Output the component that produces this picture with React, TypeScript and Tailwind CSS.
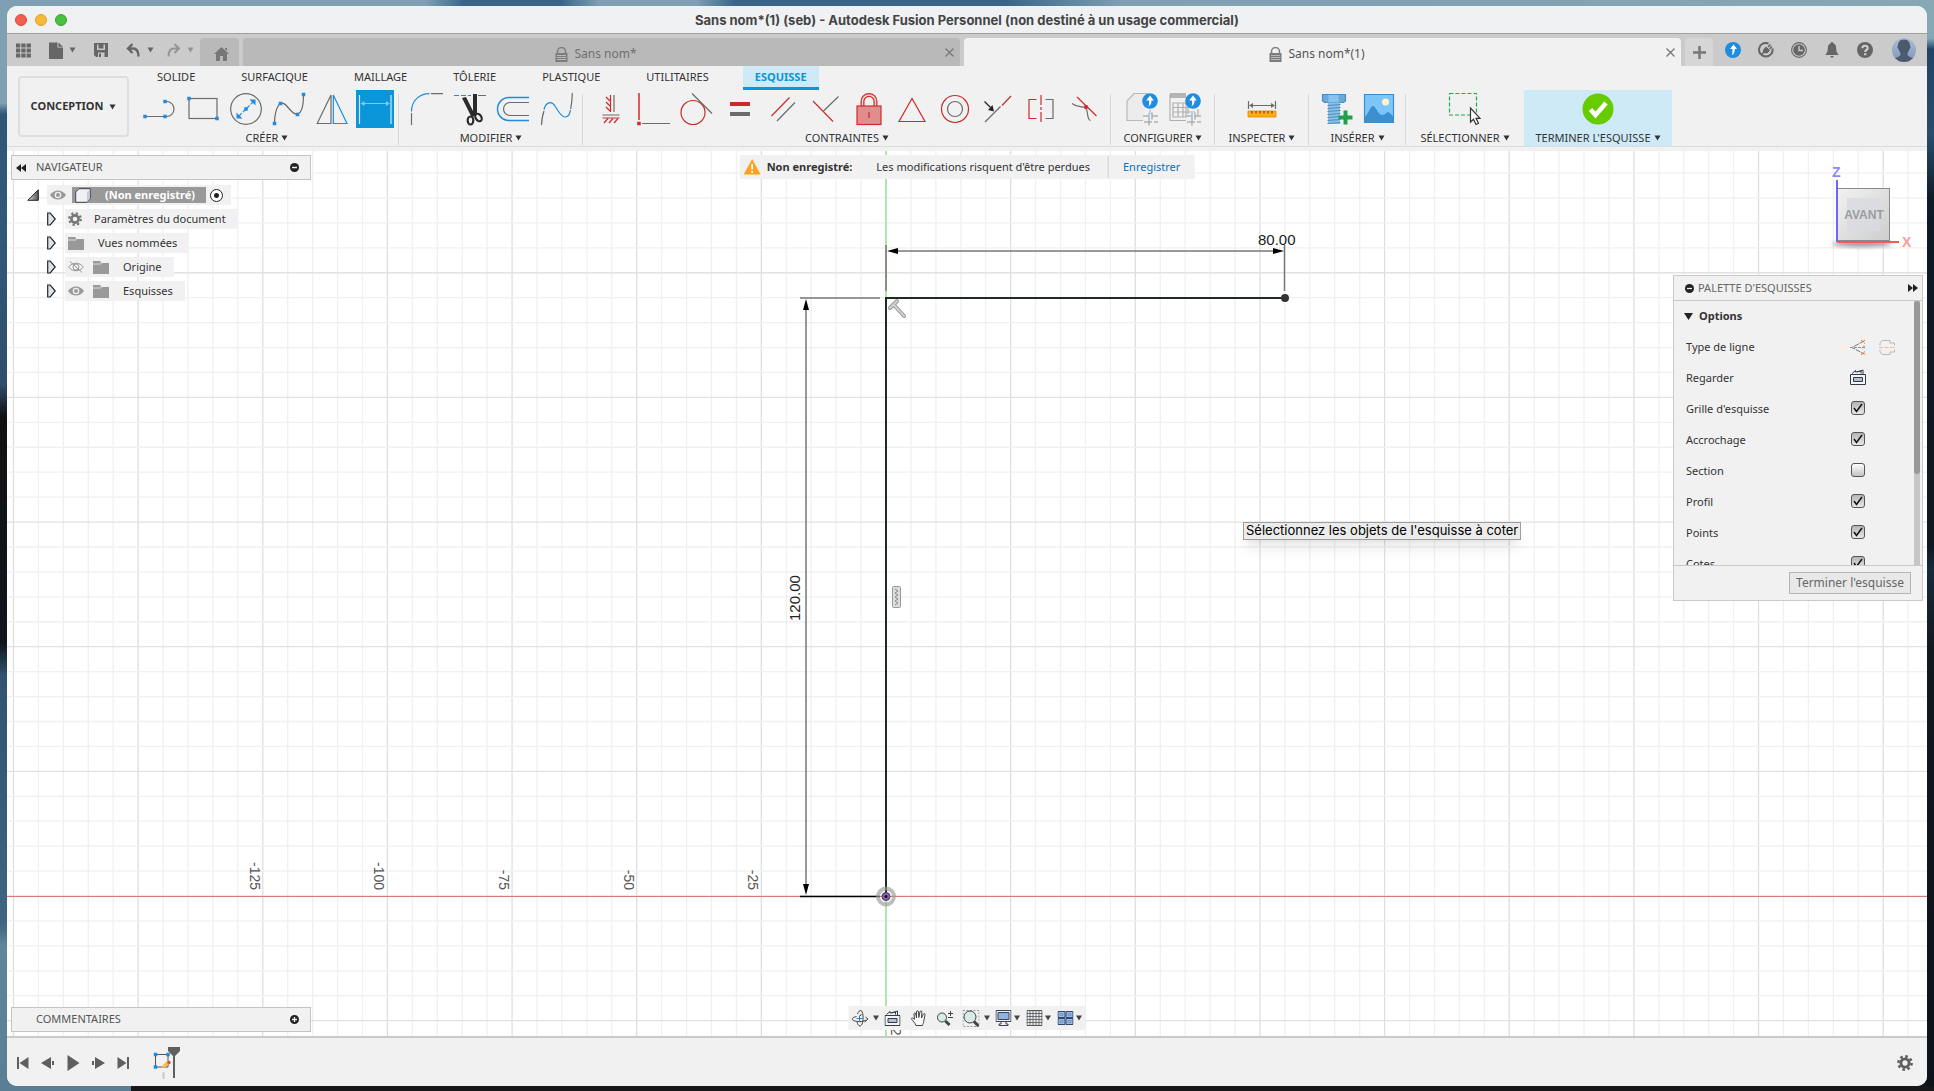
import React, { useState } from 'react';

const GREY = '#6b6b6b';
const RED = '#cf2a2a';
const BLUE = '#1e8ce0';

const MM = 4.986;
const ORIGIN_X = 879;
const ORIGIN_Y = 745;

function Caret({ className = 'text-[#333]' }: { className?: string }) {
  return (
    <svg width="7" height="6" viewBox="0 0 7 6" className={`shrink-0 ${className}`} fill="currentColor">
      <path d="M.5.500h6L3.500 5.500z" />
    </svg>
  );
}

/* ---------- toolbar drawings, all on a 38x38 box ---------- */

function Tool({ children }: { children: React.ReactNode }) {
  return (
    <svg width="38" height="38" viewBox="0 0 38 38" fill="none" stroke={GREY} strokeWidth="1.2">
      {children}
    </svg>
  );
}

function Dot({ x, y, color = BLUE }: { x: number; y: number; color?: string }) {
  return <rect x={x - 1.75} y={y - 1.75} width="3.5" height="3.5" fill={color} stroke="none" />;
}

function LineIcon() {
  return (
    <Tool>
      <path d="M4 26.5H25.500a7.500 7.500 0 0 0 0-15H24" />
      <Dot x={4} y={26.5} />
      <Dot x={24} y={26.5} />
      <Dot x={24} y={11.5} />
    </Tool>
  );
}

function RectIcon() {
  return (
    <Tool>
      <rect x="5" y="8.500" width="28" height="20" />
      <Dot x={5} y={8.5} />
      <Dot x={33} y={28.5} />
    </Tool>
  );
}

function CircleIcon() {
  return (
    <Tool>
      <circle cx="19" cy="19" r="15.300" />
      <path d="M12 26L26 12" stroke={BLUE} strokeDasharray="4 1.500" />
      <path d="M9.500 28.500v-6l6 6zM28.500 9.500v6l-6-6z" fill={BLUE} stroke="none" />
      <Dot x={19} y={19} />
    </Tool>
  );
}

function SplineIcon() {
  return (
    <Tool>
      <path d="M4.500 33c0-8 2-17 6-19.500 6-3 10 12 17 10.500 5-1.500 6-10 6-19" />
      <Dot x={4.5} y={33.5} />
      <Dot x={10.5} y={13.5} />
      <Dot x={27.5} y={24.5} />
      <Dot x={33.5} y={4.5} />
    </Tool>
  );
}

function MirrorIcon() {
  return (
    <Tool>
      <path d="M4.200 33.500L18 5v28.500z" />
      <path d="M34 33.500L20.300 5v28.500z" stroke={BLUE} />
    </Tool>
  );
}

function DimensionIcon() {
  return (
    <Tool>
      <path d="M3.500 5v29M35 5v29" stroke="#cfe9f8" />
      <path d="M6 13.500h27" stroke="#7cc8f5" />
      <path d="M4.500 13.500l4-2.500v5zM34 13.500l-4-2.500v5z" fill="#7cc8f5" stroke="none" />
    </Tool>
  );
}

function FilletIcon() {
  return (
    <Tool>
      <path d="M3.500 21.500C3.500 11 11 3.700 21.500 3.700" stroke={BLUE} />
      <path d="M3.500 23v12M23 3.700h12" />
    </Tool>
  );
}

function TrimIcon() {
  return (
    <Tool>
      <path d="M3 5.500h17" stroke={BLUE} strokeDasharray="5 2" />
      <path d="M27 5.500h8" />
      <path d="M11 8l4-1 8 16-1 4-2-1zM22 4h4v20l-4 3z" fill="#2b2b2b" stroke="none" />
      <ellipse cx="19.500" cy="30.500" rx="2.800" ry="4" stroke="#2b2b2b" strokeWidth="2.200" />
      <ellipse cx="27.500" cy="27.500" rx="2.800" ry="4" stroke="#2b2b2b" strokeWidth="2.200" transform="rotate(-35 27.5 27.5)" />
    </Tool>
  );
}

function OffsetIcon() {
  return (
    <Tool>
      <path d="M35 7.500H15A11.500 11.500 0 0 0 15 30.500H35" stroke={BLUE} strokeWidth="1.500" />
      <path d="M35 12.500H16a6.500 6.500 0 0 0 0 13H35" />
    </Tool>
  );
}

function CurveIcon() {
  return (
    <Tool>
      <path d="M4.500 35c.3-6 1-10 2.500-14M33.700 19c1-5 1.500-10 1.600-16" />
      <path d="M7 19.500C9 12 14.500 10.500 18 16s6 11 10 11 4.500-3 5.500-7" stroke={BLUE} />
    </Tool>
  );
}

function HorizontalVerticalIcon() {
  return (
    <Tool>
      <path d="M18.500 5v17M10.500 28h17" stroke={RED} />
      <path d="M22 5v17M10.500 25h17" />
      <path d="M18 11l-4-4M18 16l-4-4M18 21l-4-4M16 28.500L12 33M21 28.500L17 33M26 28.500L22 33" stroke={RED} />
    </Tool>
  );
}

function CoincidentIcon() {
  return (
    <Tool>
      <path d="M4 3v27" stroke={RED} strokeWidth="1.500" />
      <path d="M7 33.500h28" />
      <Dot x={4} y={33.5} color={RED} />
    </Tool>
  );
}

function TangentIcon() {
  return (
    <Tool>
      <circle cx="15" cy="22.500" r="12" stroke={RED} />
      <path d="M14 3.500l20 20" />
    </Tool>
  );
}

function EqualIcon() {
  return (
    <Tool>
      <path d="M9 12h20v4H9z" fill={RED} stroke="none" />
      <path d="M9 22h20v4H9z" fill={GREY} stroke="none" />
    </Tool>
  );
}

function ParallelIcon() {
  return (
    <Tool>
      <path d="M7.500 26L25.500 7.500" stroke={RED} />
      <path d="M13 31l18-18.500" />
    </Tool>
  );
}

function PerpendicularIcon() {
  return (
    <Tool>
      <path d="M6 11l20 20.500" stroke={RED} />
      <path d="M16.500 21L31.500 6.500" />
    </Tool>
  );
}

function LockIcon() {
  return (
    <Tool>
      <path d="M12.500 16v-4.500a6.500 6.500 0 0 1 13 0V16" stroke={RED} strokeWidth="4" />
      <path d="M12.500 16v-4.500a6.500 6.500 0 0 1 13 0V16" stroke="#f3d4d4" strokeWidth="1.500" />
      <rect x="7" y="16" width="24" height="18.500" fill="#e18d8d" stroke={RED} />
      <path d="M19 22v6" stroke={RED} />
    </Tool>
  );
}

function TriangleIcon() {
  return (
    <Tool>
      <path d="M19 8.500L6 31.500h26z" stroke={RED} />
    </Tool>
  );
}

function ConcentricIcon() {
  return (
    <Tool>
      <circle cx="19" cy="19" r="13.500" stroke={RED} />
      <circle cx="19" cy="19" r="7.500" />
    </Tool>
  );
}

function MidpointIcon() {
  return (
    <Tool>
      <path d="M32 6l-9 9.500" stroke={RED} />
      <path d="M21.500 16.500L6 32" />
      <path d="M5.500 11.500l6 6" stroke="#222" strokeWidth="1.300" />
      <path d="M15 21.500l-6-1.500 4.500-5z" fill="#222" stroke="none" />
    </Tool>
  );
}

function SymmetryIcon() {
  return (
    <Tool>
      <path d="M14.500 9.500H7v19h7.500" stroke={RED} />
      <path d="M19 5v28" stroke={RED} strokeDasharray="10 2 3 2" />
      <path d="M23.500 9.500H31v19h-7.500" />
    </Tool>
  );
}

function CurvatureIcon() {
  return (
    <Tool>
      <path d="M12 7l19.500 19" stroke={RED} />
      <path d="M7 13.500c5 4 9 3 13 4 4 2 1 12 5.500 13" />
      <Dot x={21} y={17} color={RED} />
    </Tool>
  );
}

function UploadBadge() {
  return (
    <g stroke="none">
      <circle cx="27" cy="11" r="7.800" fill={BLUE} />
      <path d="M27 5.500l3.800 5h-2.300c0 3-.6 4.500-3 6 .8-2 .6-4 .6-6h-2.900z" fill="#fff" />
    </g>
  );
}

function ConfigureIcon() {
  return (
    <Tool>
      <path d="M27 19.500V24M20 30.500H4V11l7-7.500h14" stroke="#b9b9b9" fill="#ececec" />
      <path d="M20 26h6M29 26h6M21 32h8M31 32h4M29 22.500v7M26 28.500v7" stroke="#b0b0b0" strokeWidth="1.500" />
      <path d="M26 23v6" stroke="#8cc4ee" strokeWidth="1.500" />
      <UploadBadge />
    </Tool>
  );
}

function ConfigureTableIcon() {
  return (
    <Tool>
      <path d="M4 3h16v5H4z" fill="#b5b5b5" stroke="none" />
      <path d="M4 4v26.500h16M32 19v6M7 13h13v14H7zM7 17.500h22M7 22h22M12 13v14M17 13v14M22 18v6" stroke="#b0b0b0" />
      <path d="M20 26h6M29 26h6M21 32h8M31 32h4M29 22.500v7M26 28.500v7" stroke="#b0b0b0" strokeWidth="1.500" />
      <path d="M26 23v6" stroke="#8cc4ee" strokeWidth="1.500" />
      <UploadBadge />
    </Tool>
  );
}

function MeasureIcon() {
  return (
    <Tool>
      <path d="M5.500 11v8M32.500 11v8M8 15.500h22" />
      <path d="M6 15.500l4-2.500v5zM32 15.500l-4-2.500v5z" fill={GREY} stroke="none" />
      <path d="M5 21h28v6H5z" fill="#ffab12" stroke="#e08c00" strokeWidth=".8" />
      <path d="M9 21v2.500M13 21v2.500M17 21v2.500M21 21v2.500M25 21v2.500M29 21v2.500" stroke="#7a4b00" />
    </Tool>
  );
}

function BoltIcon() {
  return (
    <Tool>
      <path d="M5.500 4.500h23V11l-2 1.500h-19l-2-1.500z" fill="#6aa9d8" stroke="#4a8fc4" />
      <path d="M11.500 5h10v7h-10z" fill="#8cc3ea" stroke="none" />
      <path d="M11 12.500h12V34H11z" fill="#8cc0e6" stroke="none" />
      <path d="M10.500 15.500l13-1M10.500 18.500l13-1M10.500 21.500l13-1M10.500 24.500l13-1M10.500 27.500l13-1M10.500 30.500l13-1M10.500 33.500l13-1" stroke="#4a8fc4" strokeWidth="1" />
      <path d="M28.500 20.500v14M21.500 27.500h14" stroke="#1fa04c" strokeWidth="4" />
    </Tool>
  );
}

function PictureIcon() {
  return (
    <Tool>
      <path d="M4.500 4.500h29v28h-29z" fill="#7cc6fb" stroke="#3c8dc9" />
      <circle cx="25.500" cy="12" r="3.500" fill="#fdf6c8" stroke="none" />
      <path d="M5 27c4-4 5-11 8-11s5 9 9 9 4-3 6-3 3 3 5 4v6H5z" fill="#3c90cf" stroke="none" />
    </Tool>
  );
}

function SelectIcon() {
  return (
    <Tool>
      <path d="M3.500 3.500h27v21.500h-27z" stroke="#23a84f" strokeDasharray="4 2" />
      <path d="M24.500 18v14l3-2.800 2.500 5.300 2.500-1.200-2.500-5h4z" fill="#fff" stroke="#333" />
    </Tool>
  );
}

function FinishIcon() {
  return (
    <Tool>
      <circle cx="19" cy="19" r="15.500" fill="#66cc00" stroke="none" />
      <path d="M11.500 19.500l5 5.500 10.500-12" stroke="#fff" strokeWidth="4.500" />
    </Tool>
  );
}

/* ---------- title bar and document tabs ---------- */

function TitleBar() {
  return (
    <div className="grid h-7 shrink-0 grid-cols-[1fr_auto_1fr] items-center border-b border-[#a0a19c] bg-[#eff1f3] px-2">
      <div className="flex gap-2">
        <button aria-label="Fermer" className="h-3 w-3 rounded-full border border-[#d8493c] bg-[#f35e50]" />
        <button aria-label="Réduire" className="h-3 w-3 rounded-full border border-[#dba02e] bg-[#f7ba37]" />
        <button aria-label="Agrandir" className="h-3 w-3 rounded-full border border-[#38a32f] bg-[#4bbf3f]" />
      </div>
      <h1 className="font-['Inter','Liberation_Sans',sans-serif] text-[13px] leading-4 font-bold text-[#444]">
        Sans nom*(1) (seb) - Autodesk Fusion Personnel (non destiné à un usage commercial)
      </h1>
    </div>
  );
}

function TabLock() {
  return (
    <svg width="13" height="15" viewBox="0 0 13 15" fill="#7d7d7d">
      <path d="M2.500 6V4.500a4 4 0 0 1 8 0V6" fill="none" stroke="#7d7d7d" strokeWidth="1.500" />
      <path d="M.5 6h12v9H.5z" />
      <path d="M2 8.500h9M2 10.500h9M2 12.500h9" stroke="#c8c8c8" strokeWidth=".8" />
    </svg>
  );
}

function DocumentTab({ label, active }: { label: string; active?: boolean }) {
  return (
    <div className={`flex h-7 flex-1 items-center rounded-t-sm pr-[3px] pl-2 ${active ? 'bg-[#f1f1f1] text-[#555]' : 'bg-[#b9b9b9] text-[#6f6f6f]'}`}>
      <button className="flex flex-1 items-center justify-center gap-1.5 pt-1 text-[12px] leading-4">
        <TabLock />
        {label}
      </button>
      <button aria-label={`Fermer ${label}`} className="flex h-4 w-4 items-center justify-center">
        <svg width="9" height="9" viewBox="0 0 9 9" stroke="#777" strokeWidth="1.300">
          <path d="M.5.5l8 8M8.500.5l-8 8" />
        </svg>
      </button>
    </div>
  );
}

function TabBar() {
  return (
    <div className="flex h-8 shrink-0 items-end bg-[#cbcbcb]">
      <div className="flex h-full w-[193px] items-center pl-2 text-[#666]">
        <button aria-label="Panneau de données" className="flex w-4 justify-center">
          <svg width="15" height="15" viewBox="0 0 15 15" fill="#666">
            <path d="M0 .5h4.300v4H0zM5.300.5h4.300v4H5.300zM10.600.5h4.300v4h-4.300zM0 5.500h4.300v4H0zM5.300 5.500h4.300v4H5.300zM10.600 5.500h4.300v4h-4.300zM0 10.500h4.300v4H0zM5.300 10.500h4.300v4H5.300zM10.600 10.500h4.300v4h-4.300z" />
          </svg>
        </button>
        <button aria-label="Fichier" className="ml-[18px] flex items-center gap-1.5">
          <svg width="14" height="17" viewBox="0 0 14 17" fill="#666">
            <path d="M0 .5h8.500v5H14V17H0z" />
            <path d="M9.500.5L14 4.700H9.500z" />
          </svg>
          <Caret className="text-[#666]" />
        </button>
        <button aria-label="Enregistrer" className="ml-[18px]">
          <svg width="14" height="14" viewBox="0 0 14 14">
            <path d="M0 0h14v14H2L0 12z" fill="#666" />
            <path d="M3 1.500h8V7H3z" fill="#cbcbcb" />
            <path d="M4.500 1h5v4.500h-5z" fill="#666" />
            <path d="M4 9.500h6.500V14H4z" fill="#cbcbcb" />
            <path d="M5 10.500h2V14H5z" fill="#666" />
          </svg>
        </button>
        <button aria-label="Annuler" className="ml-[18px] flex items-center gap-1.5">
          <svg width="15" height="14" viewBox="0 0 15 14" fill="none" stroke="#666" strokeWidth="2.400">
            <path d="M6.500 1L2 5.500 6.500 10M3 5.500h4c4 0 5.500 2.500 5.500 8" />
          </svg>
          <Caret className="text-[#666]" />
        </button>
        <button aria-label="Rétablir" className="ml-3 flex items-center gap-1.5">
          <svg width="15" height="14" viewBox="0 0 15 14" fill="none" stroke="#959595" strokeWidth="2">
            <path d="M8.500 1L13 5.500 8.500 10M12 5.500H8C4 5.500 2.500 8 2.500 13.500" />
          </svg>
          <Caret className="text-[#959595]" />
        </button>
      </div>
      <button aria-label="Accueil" className="mr-1 flex h-7 w-[39px] items-center justify-center rounded-t-sm bg-[#b9b9b9] pl-1 pt-1">
        <svg width="15" height="14" viewBox="0 0 15 14" fill="#777">
          <path d="M7.500 0l7.500 7h-2v7H9V9H6v5H2V7H0zM11 1h2v3l-2-2z" />
        </svg>
      </button>
      <div className="flex flex-1 gap-1">
        <DocumentTab label="Sans nom*" />
        <DocumentTab label="Sans nom*(1)" active />
      </div>
      <button aria-label="Nouvel onglet" className="ml-1 flex h-7 w-7 items-center justify-center rounded-t-sm bg-[#d6d6d6]">
        <svg width="13" height="13" viewBox="0 0 13 13" stroke="#777" strokeWidth="2.500">
          <path d="M6.500 0v13M0 6.500h13" />
        </svg>
      </button>
      <div className="flex h-full w-[214px] items-center gap-[17px] pl-3">
        <button aria-label="État de la tâche">
          <svg width="16" height="16" viewBox="0 0 16 16">
            <circle cx="8" cy="8" r="8" fill={BLUE} />
            <path d="M8.500 2.500l3.500 4.500H9.800c0 3-.8 5-3 6.500.8-2 .6-4 .6-6.500H5z" fill="#fff" />
          </svg>
        </button>
        <button aria-label="Extensions">
          <svg width="16" height="16" viewBox="0 0 16 16" fill="none" stroke="#666">
            <path d="M10.500 1.500A6.800 6.800 0 1 0 14.500 6.500" strokeWidth="2" />
            <path d="M3.500 12.500L7 9M10 5l2.500-2.500M11.500 7L14 4.500" strokeWidth="1.600" />
            <path d="M8 5l3.500 3.500L9 11l-3-.5L5.500 8z" fill="#666" />
          </svg>
        </button>
        <button aria-label="Historique">
          <svg width="16" height="16" viewBox="0 0 16 16">
            <circle cx="8" cy="8" r="7.400" fill="none" stroke="#666" strokeWidth="1.100" />
            <circle cx="8" cy="8" r="5.800" fill="#666" />
            <path d="M8 4v4.500h4" stroke="#cbcbcb" strokeWidth="1.400" fill="none" />
          </svg>
        </button>
        <button aria-label="Notifications">
          <svg width="16" height="16" viewBox="0 0 16 16" fill="#666">
            <path d="M8 0c.8 0 1.200.5 1.200 1.300C11.500 2 12.200 4 12.200 6.500c0 3 .8 4.500 2.600 6.500H1.200C3 11 3.800 9.500 3.800 6.500c0-2.500.7-4.500 3-5.200C6.800.5 7.200 0 8 0zM6.300 14h3.400c-.3 2-3.100 2-3.400 0z" />
          </svg>
        </button>
        <button aria-label="Aide">
          <svg width="16" height="16" viewBox="0 0 16 16">
            <circle cx="8" cy="8" r="8" fill="#666" />
            <path d="M5.400 6.200C5.400 3 10.700 3 10.700 6c0 2-2.500 1.800-2.500 4" fill="none" stroke="#d4d4d4" strokeWidth="2" />
            <path d="M7.100 11.300h2.200v2H7.100z" fill="#d4d4d4" />
          </svg>
        </button>
        <button aria-label="Profil" className="ml-0.5">
          <svg width="24" height="24" viewBox="0 0 24 24">
            <defs>
              <linearGradient id="avatar" x1="0" y1="0" x2="0" y2="1">
                <stop offset="0" stopColor="#a9bdd6" />
                <stop offset="1" stopColor="#8097bd" />
              </linearGradient>
              <clipPath id="avatar-clip">
                <circle cx="12" cy="12" r="12" />
              </clipPath>
            </defs>
            <circle cx="12" cy="12" r="12" fill="url(#avatar)" />
            <path clipPath="url(#avatar-clip)" d="M12 1.500c4.500 0 6 3 6 6 1 .5.500 3-.5 3.500-.4 2-1.300 3-2 4 0 3 .5 3.500 5.500 5v4H3v-4c5-1.500 5.500-2 5.500-5-.7-1-1.600-2-2-4-1-.5-1.500-3-.5-3.500 0-3 1.500-6 6-6z" fill="#4c5a70" />
          </svg>
        </button>
      </div>
    </div>
  );
}

/* ---------- ribbon ---------- */

const ribbonTabs = ['SOLIDE', 'SURFACIQUE', 'MAILLAGE', 'TÔLERIE', 'PLASTIQUE', 'UTILITAIRES', 'ESQUISSE'];

const groups = [
  {
    label: 'CRÉER',
    width: 'w-[264px]',
    tools: [
      { name: 'Ligne', icon: LineIcon },
      { name: 'Rectangle', icon: RectIcon },
      { name: 'Cercle', icon: CircleIcon },
      { name: 'Spline', icon: SplineIcon },
      { name: 'Symétrie', icon: MirrorIcon },
      { name: 'Cote', icon: DimensionIcon, active: true },
    ],
  },
  {
    label: 'MODIFIER',
    width: 'w-[184px]',
    tools: [
      { name: 'Congé', icon: FilletIcon },
      { name: 'Ajuster', icon: TrimIcon },
      { name: 'Décaler', icon: OffsetIcon },
      { name: 'Courbe', icon: CurveIcon },
    ],
  },
  {
    label: 'CONTRAINTES',
    width: 'w-[528px]',
    tools: [
      { name: 'Horizontal/Vertical', icon: HorizontalVerticalIcon },
      { name: 'Coïncident', icon: CoincidentIcon },
      { name: 'Tangent', icon: TangentIcon },
      { name: 'Égal', icon: EqualIcon },
      { name: 'Parallèle', icon: ParallelIcon },
      { name: 'Perpendiculaire', icon: PerpendicularIcon },
      { name: 'Verrouiller', icon: LockIcon },
      { name: 'Milieu', icon: TriangleIcon },
      { name: 'Concentrique', icon: ConcentricIcon },
      { name: 'Colinéaire', icon: MidpointIcon },
      { name: 'Symétrique', icon: SymmetryIcon },
      { name: 'Courbure', icon: CurvatureIcon },
    ],
  },
  {
    label: 'CONFIGURER',
    width: 'w-[104px]',
    tools: [
      { name: 'Configurer', icon: ConfigureIcon },
      { name: 'Table', icon: ConfigureTableIcon },
    ],
  },
  { label: 'INSPECTER', width: 'w-[94px]', tools: [{ name: 'Mesurer', icon: MeasureIcon }] },
  {
    label: 'INSÉRER',
    width: 'w-[97px]',
    tools: [
      { name: 'Fixation', icon: BoltIcon },
      { name: 'Canevas', icon: PictureIcon },
    ],
  },
  { label: 'SÉLECTIONNER', width: 'w-[118px]', tools: [{ name: 'Sélectionner', icon: SelectIcon }] },
  { label: "TERMINER L'ESQUISSE", width: 'w-[148px]', tools: [{ name: "Terminer l'esquisse", icon: FinishIcon }], finish: true },
];

function Ribbon() {
  const [tab, setTab] = useState('ESQUISSE');

  return (
    <div className="shrink-0 border-b-4 border-[#f1f1f1] bg-[#f1f1f1]">
      <div className="flex h-[81px] border-b border-[#dcdcdc]">
        <button className="mt-2.5 ml-[11px] flex h-[61px] w-[111px] items-center justify-center gap-1.5 rounded-sm border-2 border-[#dedede] text-[11px] font-bold text-[#333]">
          CONCEPTION
          <Caret />
        </button>
        <div className="flex flex-col">
          <nav className="ml-4 flex h-6 gap-[22px] text-[11px] leading-4 text-[#333]">
            {ribbonTabs.map((name) => (
              <button
                key={name}
                onClick={() => setTab(name)}
                className={`h-6 px-3 ${tab === name ? 'border-b-3 border-[#0a96d8] bg-[#cdeaf6] font-bold text-[#0a96d8]' : 'border-b-3 border-transparent'}`}
              >
                {name}
              </button>
            ))}
          </nav>
          <div className="ml-1.5 flex flex-1">
            {groups.map((group) => (
              <div
                key={group.label}
                className={`relative flex flex-col items-center ${group.width} ${group.finish ? 'bg-[#cdeaf6]' : ''}`}
              >
                <div className="flex">
                  {group.tools.map(({ name, icon: Icon, active }: { name: string; icon: () => React.JSX.Element; active?: boolean }) => (
                    <button key={name} aria-label={name} className="flex w-[43px] justify-center">
                      <span className={active ? 'bg-[#0a96d8]' : ''}>
                        <Icon />
                      </span>
                    </button>
                  ))}
                </div>
                <button className="mt-0.5 flex items-center gap-[3px] text-[11px] leading-4 whitespace-nowrap text-[#333]">
                  {group.label}
                  <Caret />
                </button>
                {!group.finish && group.label !== 'SÉLECTIONNER' && (
                  <span className="absolute top-1 right-0 h-[51px] w-px bg-[#d8d8d8]" />
                )}
              </div>
            ))}
          </div>
        </div>
      </div>
    </div>
  );
}

/* ---------- canvas ---------- */

function Grid() {
  const vertical = Array.from({ length: 90 }, (_, i) => i - 36);
  const horizontal = Array.from({ length: 60 }, (_, i) => i - 45);
  const ticks = [-125, -100, -75, -50, -25];

  return (
    <svg className="absolute inset-0 h-full w-full" aria-label="Esquisse">
      <g strokeWidth="1.300">
        {vertical.map((n) => (
          <line key={n} x1={ORIGIN_X + n * 5 * MM} x2={ORIGIN_X + n * 5 * MM} y1="0" y2="100%" stroke={n % 5 === 0 ? '#dfdfdf' : '#f0f0f0'} />
        ))}
        {horizontal.map((n) => (
          <line key={n} y1={ORIGIN_Y + n * 5 * MM} y2={ORIGIN_Y + n * 5 * MM} x1="0" x2="100%" stroke={n % 5 === 0 ? '#e2e2e2' : '#f0f0f0'} />
        ))}
      </g>
      <line x1="0" x2="100%" y1={ORIGIN_Y + 0.5} y2={ORIGIN_Y + 0.5} stroke="#d87878" />
      <line x1={ORIGIN_X} x2={ORIGIN_X} y1="0" y2="100%" stroke="#abe9ab" strokeWidth="2" />
      <g fill="#555" fontFamily="'Liberation Sans', Arial, sans-serif" fontSize="14">
        {ticks.map((t) => (
          <text key={t} textAnchor="end" transform={`translate(${ORIGIN_X + t * MM - 13} ${ORIGIN_Y - 6}) rotate(90)`}>
            {t}
          </text>
        ))}
        <text transform={`translate(${ORIGIN_X + 5} 872) rotate(90)`}>-25</text>
      </g>

      <g stroke="#777" strokeWidth="1.500">
        <path d="M879 94v46M1277.500 94v46M884 100h388M799 152v588M793 147h80" />
        <path d="M793 745.500h80" stroke="#000" />
      </g>
      <path d="M880 100l11-3v6zM1277 100l-11-3v6zM799 148l-3 11h6zM799 744l-3-11h6z" />
      <path d="M879 745V147h398" fill="none" stroke="#1d2b23" strokeWidth="2" />
      <circle cx="1278" cy="147" r="4" fill="#333" />
      <g fill="#222" fontFamily="'Liberation Sans', Arial, sans-serif" fontSize="15">
        <text x="1251" y="94">80.00</text>
        <text transform="translate(793 470) rotate(-90)">120.00</text>
      </g>

      <g fill="none" strokeLinecap="round">
        <path d="M883 157l7-7M887 154l10 11" stroke="#999" strokeWidth="4" />
        <path d="M883 157l7-7M887 154l10 11" stroke="#d0d0d0" strokeWidth="2" />
      </g>
      <rect x="885.500" y="435.500" width="8" height="21" rx="1" fill="#ddd" stroke="#999" />
      <path d="M888 438l3 2-3 2 3 2-3 2 3 2-3 2 3 2-3 2" fill="none" stroke="#888" />

      <circle cx="879" cy="745.500" r="8" fill="none" stroke="#999" strokeOpacity=".65" strokeWidth="4" />
      <circle cx="879" cy="745.500" r="4" fill="#8a63b8" stroke="#3d3350" />
      <circle cx="879" cy="745.500" r="1.500" fill="#111" />
    </svg>
  );
}

function RoundSign({ plus }: { plus?: boolean }) {
  return (
    <svg width="9" height="9" viewBox="0 0 9 9">
      <circle cx="4.500" cy="4.500" r="4.500" fill="#222" />
      <path d={plus ? 'M2 4.500h5M4.500 2v5' : 'M2 4.500h5'} stroke="#f1f1f1" strokeWidth="1.300" />
    </svg>
  );
}

function Eye({ off }: { off?: boolean }) {
  return (
    <svg width="16" height="12" viewBox="0 0 16 12">
      {off ? (
        <g fill="none" stroke="#999">
          <path d="M.7 6C4 1 12 1 15.300 6 12 11 4 11 .7 6zM2 .5l12 11" />
          <circle cx="8" cy="6" r="3" />
        </g>
      ) : (
        <g>
          <path d="M0 6C4 0 12 0 16 6 12 12 4 12 0 6z" fill="#999" />
          <circle cx="8" cy="6" r="3.300" fill="#f1f1f1" />
          <circle cx="8" cy="6" r="2" fill="#999" />
        </g>
      )}
    </svg>
  );
}

function Folder() {
  return (
    <svg width="16" height="13" viewBox="0 0 16 13" fill="#999">
      <path d="M0 0h7l1.500 2H16v11H0z" />
      <path d="M0 3h7.500L9 1.800" stroke="#ddd" fill="none" />
    </svg>
  );
}

function Gear({ size, color }: { size: number; color: string }) {
  return (
    <svg width={size} height={size} viewBox="0 0 14 14" fill="none" stroke={color}>
      <circle cx="7" cy="7" r="3.600" strokeWidth="2.600" />
      <circle cx="7" cy="7" r="5.800" strokeWidth="2.200" strokeDasharray="2.280 2.280" />
    </svg>
  );
}

function Expander() {
  return (
    <button aria-label="Développer" className="mr-[9px]">
      <svg width="9" height="14" viewBox="0 0 9 14">
        <path d="M.7 1h2.500L8.300 7l-5.100 6H.7z" fill="#e0e2ea" stroke="#222" strokeWidth="1.200" />
      </svg>
    </button>
  );
}

const treeRows = [
  { label: 'Paramètres du document', icon: 'gear', gap: 'gap-3' },
  { label: 'Vues nommées', icon: 'folder', gap: 'gap-[14px]' },
  { label: 'Origine', icon: 'off', gap: 'gap-[14px]' },
  { label: 'Esquisses', icon: 'on', gap: 'gap-[14px]' },
];

function Browser() {
  return (
    <aside className="absolute top-1 left-1 w-[300px] text-[11px] text-[#333]">
      <div className="flex h-[25px] items-center border border-[#c4c4c4] bg-[#f1f1f1] pr-[11px] pl-1">
        <button aria-label="Réduire le navigateur">
          <svg width="10" height="8" viewBox="0 0 10 8" fill="#222">
            <path d="M5 0v8L0 4zM10 0v8L5 4z" />
          </svg>
        </button>
        <h2 className="ml-2.5 flex-1 text-[#555]">NAVIGATEUR</h2>
        <button aria-label="Réduire">
          <RoundSign />
        </button>
      </div>
      <ul className="mt-[5px] flex flex-col gap-1">
        <li className="flex h-5 items-center pl-4">
          <svg width="12" height="12" viewBox="0 0 12 12" className="mr-2">
            <defs>
              <linearGradient id="tri">
                <stop offset="0" stopColor="#ddd" />
                <stop offset="1" stopColor="#555" />
              </linearGradient>
            </defs>
            <path d="M11.300.8v10.500H.8z" fill="url(#tri)" stroke="#222" />
          </svg>
          <div className="flex h-5 items-center bg-[#f1f1f1] pr-2 pl-[3px]">
            <Eye />
            <div className="mr-1 ml-1.5 flex h-4 items-center gap-[14px] bg-[#999] pr-[11px] pl-[3px] font-bold text-white">
              <svg width="16" height="15" viewBox="0 0 16 15">
                <path d="M.7 4L4 .7h11.300v9.800l-3.500 3.800H.7z" fill="#f0f1f6" stroke="#444" />
                <path d="M12 4l3-3v9.500l-3 3.500z" fill="#c9cbd6" />
              </svg>
              (Non enregistré)
            </div>
            <input type="radio" name="component" defaultChecked aria-label="Activer le composant" className="h-[13px] w-[13px] appearance-none rounded-full border border-[#222] bg-[radial-gradient(circle,#222_2px,white_3px)]" />
          </div>
        </li>
        {treeRows.map((row) => (
          <li key={row.label} className="flex h-5 items-center pl-9">
            <Expander />
            <div className={`flex h-5 items-center bg-[#f1f1f1] pr-3 pl-[3px] ${row.gap}`}>
              {row.icon === 'gear' && <Gear size={14} color="#777" />}
              {row.icon === 'folder' && <Folder />}
              {(row.icon === 'on' || row.icon === 'off') && (
                <span className="flex items-center gap-[9px]">
                  <Eye off={row.icon === 'off'} />
                  <Folder />
                </span>
              )}
              {row.label}
            </div>
          </li>
        ))}
      </ul>
    </aside>
  );
}

function Comments() {
  return (
    <div className="absolute bottom-1 left-1 flex h-[25px] w-[300px] items-center justify-between border border-[#c4c4c4] bg-[#f1f1f1] pr-[11px] pl-6 text-[11px] text-[#555]">
      <h2>COMMENTAIRES</h2>
      <button aria-label="Ajouter un commentaire">
        <RoundSign plus />
      </button>
    </div>
  );
}

function UnsavedBanner() {
  return (
    <div className="absolute top-1 left-1/2 flex h-6 -translate-x-1/2 items-center bg-[#f1f1f1] text-[11px] whitespace-nowrap text-[#333]">
      <svg width="17" height="16" viewBox="0 0 17 16" className="mx-1">
        <path d="M8.500 0L17 15.500H0z" fill="#ffa01e" />
        <path d="M8.500 5v5.500M8.500 12v2" stroke="#fff" strokeWidth="1.800" />
      </svg>
      <strong className="ml-0.5">Non enregistré:</strong>
      <span className="ml-6">Les modifications risquent d'être perdues</span>
      <a href="#enregistrer" className="ml-[18px] flex h-[22px] items-center border-l border-[#d0d0d0] px-3.5 text-[#0a6fb5]">
        Enregistrer
      </a>
    </div>
  );
}

function ViewCube() {
  return (
    <svg width="84" height="92" viewBox="0 0 84 92" className="absolute top-[10px] right-4" fontFamily="'Liberation Sans', Arial, sans-serif" fontWeight="bold">
      <defs>
        <linearGradient id="face" x1="0" y1="0" x2="1" y2="1">
          <stop offset="0" stopColor="#f2f2f2" />
          <stop offset="1" stopColor="#cdcdcd" />
        </linearGradient>
        <filter id="soft" x="-20%" y="-200%" width="140%" height="500%">
          <feGaussianBlur stdDeviation="2" />
        </filter>
      </defs>
      <ellipse cx="35" cy="83" rx="30" ry="2.500" fill="#888" filter="url(#soft)" />
      <rect x="10.500" y="27.500" width="52" height="52" fill="url(#face)" stroke="#8a8a8a" />
      <rect x="20" y="37" width="33" height="33" fill="#d9dbdf" opacity=".8" />
      <path d="M10 19v62" stroke="#6a6af0" strokeWidth="2" />
      <path d="M10 81h62" stroke="#f25a5a" strokeWidth="2" />
      <text x="37" y="58" textAnchor="middle" fontSize="12" fill="#9a9da3">AVANT</text>
      <text x="5" y="16" fontSize="14" fill="#8c8cf8">Z</text>
      <text x="75" y="86" fontSize="14" fill="#f99">X</text>
    </svg>
  );
}

/* ---------- sketch palette ---------- */

const options = [
  { label: "Grille d'esquisse", checked: true },
  { label: 'Accrochage', checked: true },
  { label: 'Section', checked: false },
  { label: 'Profil', checked: true },
  { label: 'Points', checked: true },
  { label: 'Cotes', checked: true },
];

function LookAt() {
  return (
    <svg width="16" height="16" viewBox="0 0 16 16" fill="none" stroke="#333a48">
      <path d="M.5 5.500h15v10H.5z" fill="#f4f5f8" />
      <path d="M3.500 8.500h9v4h-9z" fill="#b7bdca" />
      <path d="M2 4.500l3.500-3v1.500L11 2v2.500M7 3L13 1v4" />
    </svg>
  );
}

function SketchPalette() {
  return (
    <aside className="absolute top-[124px] right-1 w-[250px] border border-[#c9c9c9] bg-[#f1f1f1] text-[11px] text-[#333]">
      <div className="flex h-[25px] items-center border-b border-[#c9c9c9] pr-1 pl-[11px]">
        <button aria-label="Réduire">
          <RoundSign />
        </button>
        <h2 className="ml-1 flex-1 text-[#666]">PALETTE D'ESQUISSES</h2>
        <button aria-label="Ancrer la palette">
          <svg width="10" height="8" viewBox="0 0 10 8" fill="#222">
            <path d="M0 0v8l5-4zM5 0v8l5-4z" />
          </svg>
        </button>
      </div>
      <div className="flex h-[265px] overflow-hidden border-b border-[#c9c9c9]">
        <div className="flex-1 pl-3">
          <button className="flex h-[31px] w-full items-center gap-1.5 font-bold">
            <svg width="9" height="7" viewBox="0 0 9 7" className="-ml-0.5" fill="#222">
              <path d="M0 0h9L4.500 7z" />
            </svg>
            Options
          </button>
          <div className="flex h-[31px] items-center">
            <span className="flex-1">Type de ligne</span>
            <button aria-label="Construction" className="mr-3">
              <svg width="17" height="17" viewBox="0 0 17 17" fill="none" stroke="#777">
                <path d="M14 2L2 8.500 14 15" strokeDasharray="5 1" />
                <path d="M0 8.500h16M11 1l4 3.500M15 1l-2 2M11 16l4-3.500M13 13.500l2 2M14 6.500v4" stroke="#e27a2c" strokeDasharray="3 1" />
              </svg>
            </button>
            <button aria-label="Ligne d'axe" className="mr-[18px]">
              <svg width="17" height="17" viewBox="0 0 17 17" fill="none" stroke="#b9b9b9">
                <path d="M1 6.500V4l2-2.500h8V4h4.500v2.500M1 10.500V13l2 2.500h8V13h4.500v-2.500" />
                <path d="M0 8.500h17" stroke="#f1b994" strokeDasharray="4 1.500" />
              </svg>
            </button>
          </div>
          <div className="flex h-[31px] items-center">
            <span className="flex-1">Regarder</span>
            <button aria-label="Regarder" className="mr-12 mb-1">
              <LookAt />
            </button>
          </div>
          {options.map((option) => (
            <label key={option.label} className="flex h-[31px] items-center">
              <span className="flex-1">{option.label}</span>
              <span className="relative mr-[49px] mb-1 h-[14px] w-[14px]">
                <input
                  type="checkbox"
                  defaultChecked={option.checked}
                  className="peer block h-[14px] w-[14px] appearance-none rounded-[3px] border border-[#555] bg-linear-to-b from-white to-[#c4c4c4] checked:from-[#b5b5b5] checked:to-[#e8e8e8]"
                />
                <svg width="14" height="14" viewBox="0 0 14 14" className="pointer-events-none absolute inset-0 hidden peer-checked:block">
                  <path d="M3 7l2.500 3.500L11 3" fill="none" stroke="#111" strokeWidth="1.500" />
                </svg>
              </span>
            </label>
          ))}
        </div>
        <div className="mr-0.5 w-1.5 bg-[#c6c6c6]">
          <div className="h-[173px] rounded-full bg-[#999]" />
        </div>
      </div>
      <div className="flex h-[34px] items-center justify-end pr-[11px]">
        <button className="h-[22px] w-[122px] border border-[#b5b5b5] bg-[#e8e8e8] text-[12px] whitespace-nowrap text-[#666]">Terminer l'esquisse</button>
      </div>
    </aside>
  );
}

/* ---------- navigation bar ---------- */

function NavigationBar() {
  return (
    <div className="absolute bottom-[6px] left-1/2 flex h-6 w-[237px] -translate-x-1/2 items-center bg-[#f1f1f1] px-[3px]">
      <button aria-label="Orbite" className="flex w-7 shrink-0 items-center justify-between">
        <svg width="17" height="17" viewBox="0 0 17 17" fill="none" stroke="#444">
          <path d="M6 4C8-1 11-1 11.500 6c.5 5-1 10-3 10-1.500 0-2.500-2-3-4" />
          <path d="M5 6.500c-6 1.500-6 4 1 5 3 .4 6 0 8.500-1.500M10 4l-1.500 2M14 7l2.500 2-3.500 3" />
          <path d="M8 5.500v6M5 8.500h6" stroke="#2b7fd0" />
        </svg>
        <Caret className="text-[#444]" />
      </button>
      <button aria-label="Regarder" className="ml-[5px] shrink-0">
        <LookAt />
      </button>
      <button aria-label="Panoramique" className="ml-2.5 shrink-0">
        <svg width="17" height="17" viewBox="0 0 17 17" fill="#fbfbfb" stroke="#444">
          <path d="M5.500 15.500C5 13 2 11 .8 8.500c.7-1 2-.6 3.200 1L3.500 4c0-1.200 1.500-1.500 1.800 0l.7 4V2c0-1.600 1.900-1.600 2 0l.3 5.500L9.500 1.800c.3-1.500 2-1.200 1.900.3L11 8l1.800-3.800c.6-1.200 2-.6 1.700.6l-1.300 6.700c-.3 2-.9 2.500-1.200 4z" />
        </svg>
      </button>
      <button aria-label="Zoom" className="ml-[9px] shrink-0">
        <svg width="17" height="17" viewBox="0 0 17 17" fill="none" stroke="#444">
          <circle cx="5.500" cy="7.500" r="4.500" fill="#d9ebe9" />
          <path d="M9 11l4 4" strokeWidth="3" />
          <path d="M14 1v5M11.500 3.500h5M11.500 7.500h5" />
        </svg>
      </button>
      <button aria-label="Fenêtre de zoom" className="ml-[9px] flex w-7 shrink-0 items-center justify-between">
        <svg width="17" height="17" viewBox="0 0 17 17" fill="none" stroke="#444">
          <path d="M.5.5h16v16H.5z" stroke="#999" strokeDasharray="2 1.500" />
          <circle cx="7.500" cy="7" r="6" fill="#d9ebe9" />
          <path d="M11.500 11.500l4.500 4.500" strokeWidth="3" />
        </svg>
        <Caret className="text-[#444]" />
      </button>
      <button aria-label="Paramètres d'affichage" className="ml-[5px] flex w-[25px] shrink-0 items-center justify-between">
        <svg width="16" height="16" viewBox="0 0 16 16" fill="none" stroke="#3c4454">
          <path d="M.5.5h15v11H.5z" fill="#eef0f4" />
          <path d="M2.500 2.500h11v7h-11z" fill="#8fb2e2" />
          <path d="M5.500 12v2h-2v1.500h9V14h-2v-2" fill="#eef0f4" />
        </svg>
        <Caret className="text-[#444]" />
      </button>
      <button aria-label="Grille et accrochages" className="ml-1.5 flex w-[25px] shrink-0 items-center justify-between">
        <svg width="16" height="16" viewBox="0 0 16 16" fill="#e6eaf0" stroke="#555">
          <path d="M.5.5h15v15H.5z" />
          <path d="M3.500 0v16M6.500 0v16M9.500 0v16M12.500 0v16M0 3.500h16M0 6.500h16M0 9.500h16M0 12.500h16" strokeWidth=".8" />
        </svg>
        <Caret className="text-[#444]" />
      </button>
      <button aria-label="Fenêtres" className="ml-1.5 flex w-[25px] shrink-0 items-center justify-between">
        <svg width="16" height="14" viewBox="0 0 16 14" fill="#9dbde6" stroke="#33496b">
          <path d="M.5.5h7v6h-7zM8.500.5h7v6h-7zM.5 7.500h7v6h-7zM8.500 7.500h7v6h-7z" />
          <path d="M2.500 2.500h3v2h-3zM10.500 2.500h3v2h-3zM2.500 9.500h3v2h-3zM10.500 9.500h3v2h-3z" stroke="#5f85ba" strokeWidth=".7" />
        </svg>
        <Caret className="text-[#444]" />
      </button>
    </div>
  );
}

/* ---------- timeline ---------- */

const playback = [
  { name: 'Début', path: 'M2 2v12h2V2zM13.500 2v12L4.500 8z' },
  { name: 'Étape précédente', path: 'M11 2v12L1 8zM12 6h2v4h-2z' },
  { name: 'Lecture', path: 'M2.500 0v16l12-8z' },
  { name: 'Étape suivante', path: 'M5 2v12l10-6zM2 6h2v4H2z' },
  { name: 'Fin', path: 'M12 2v12h2V2zM2.500 2v12l9-6z' },
];

function Timeline() {
  return (
    <footer className="flex h-[50px] shrink-0 items-center border-t-2 border-[#c9c9c9] bg-[#f1f1f1] pt-0.5 pr-[14px] pl-2">
      <div className="flex gap-[9px]">
        {playback.map((item) => (
          <button key={item.name} aria-label={item.name}>
            <svg width="16" height="16" viewBox="0 0 16 16" fill="#5f5f5f">
              <path d={item.path} />
            </svg>
          </button>
        ))}
      </div>
      <button aria-label="Esquisse1" className="ml-5 flex-1">
        <svg width="30" height="34" viewBox="0 0 30 34">
          <path d="M4.500 8.500H17v12.500H4.500z" fill="none" stroke="#555" />
          <Dot x={4.5} y={8.5} />
          <Dot x={17} y={8.5} />
          <Dot x={4.5} y={21} />
          <path d="M11 22l1.500-3.500 4.500-4 2 2-4.500 4.500z" fill="#ffbd3d" />
          <circle cx="18" cy="16.500" r="1.700" fill="#e0484a" />
          <path d="M11.500 26h2v7h-2z" fill="#c9c9c9" />
          <path d="M17 1h12v4l-5 5v22h-2V10l-5-5z" fill="#5f5f5f" />
        </svg>
      </button>
      <button aria-label="Paramètres de la chronologie">
        <Gear size={16} color="#5f5f5f" />
      </button>
    </footer>
  );
}

function App() {
  return (
    <div className="h-screen bg-[linear-gradient(to_right,#5a7f94_0px,#5a7f94_131px,#17171a_131px)] font-['Noto_Sans','Open_Sans',sans-serif]">
      <div className="h-full bg-[linear-gradient(to_right,#7f9fb3,#7f9fb3_22%,#3a6588_24%,#3a6588_29%,#7f9fb3_31%,#7f9fb3_36%,#3a6588_38%,#3a6588_52%,#7f9fb3_58%,#86a7b4)] bg-size-[100%_20px] bg-no-repeat">
        <div className="grid h-full grid-cols-[7px_1fr_7px] pt-[6px] pb-[5px]">
          <div className="bg-[linear-gradient(to_bottom,#7f9fb3_0%,#7f9fb3_9%,#2f5577_10%,#31587a_20%,#2f4f6b_35%,#111_38%,#10161f_59%,#31536f_62%,#3f6580_85%,#5f8598_87%,#5a7f94_100%)]" />
          <div className="flex min-w-0 flex-col overflow-hidden rounded-[10px] bg-white">
            <TitleBar />
            <TabBar />
            <Ribbon />
            <main className="relative min-h-0 flex-1 overflow-hidden bg-white">
              <Grid />
              <Browser />
              <UnsavedBanner />
              <ViewCube />
              <SketchPalette />
              <div role="tooltip" className="absolute top-[371px] left-[1236px] flex h-[18px] items-center border border-[#9d9d9d] bg-[#ececec] px-0.5 font-['Inter','Liberation_Sans',sans-serif] text-[13px] whitespace-nowrap text-black shadow-lg">
                Sélectionnez les objets de l'esquisse à coter
              </div>
              <Comments />
              <NavigationBar />
            </main>
            <Timeline />
          </div>
          <div className="bg-[linear-gradient(to_bottom,#86a7b4_0%,#86a7b4_3%,#1f4463_4%,#2a4d69_12%,#0d1a28_18%,#0e1822_50%,#152a3c_52%,#101820_60%,#0c1219_100%)]" />
        </div>
      </div>
    </div>
  );
}

export default App;
